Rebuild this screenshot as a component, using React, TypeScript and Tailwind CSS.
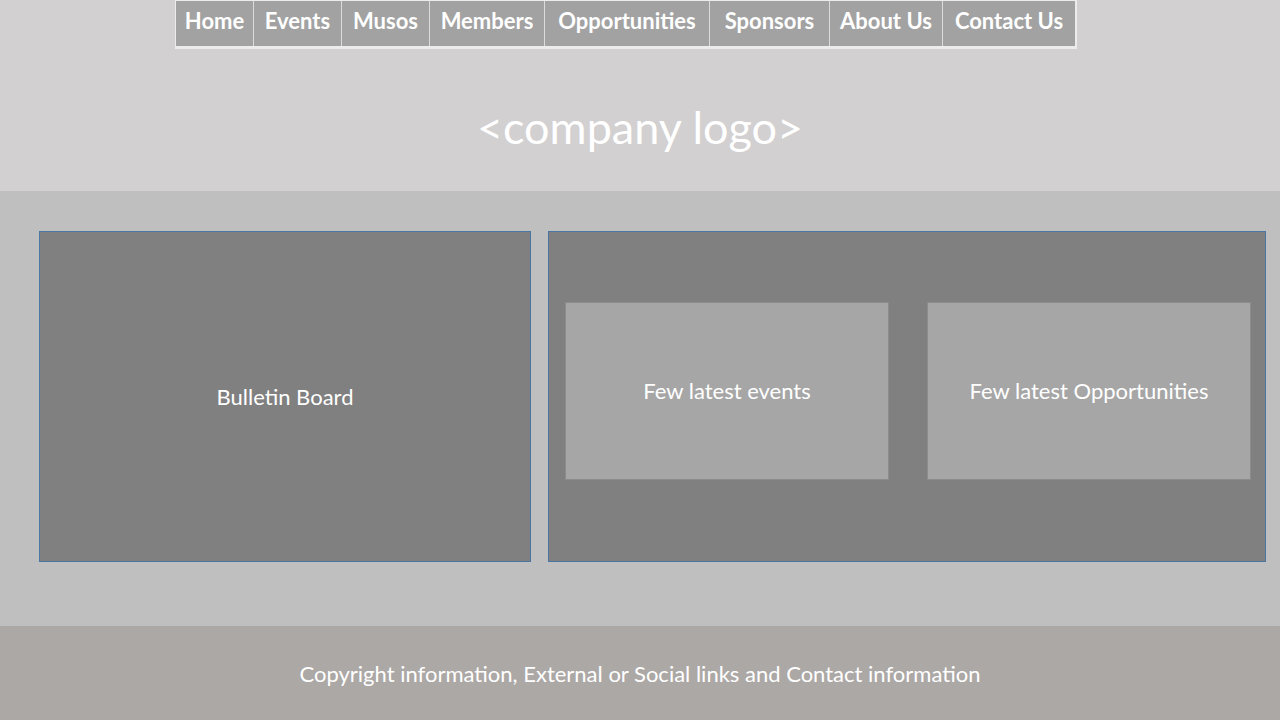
const navItems = [
  { label: 'Home', w: 'w-[78px]' },
  { label: 'Events', w: 'w-[88px]' },
  { label: 'Musos', w: 'w-[88px]' },
  { label: 'Members', w: 'w-[115px]' },
  { label: 'Opportunities', w: 'w-[165px]' },
  { label: 'Sponsors', w: 'w-[120px]' },
  { label: 'About Us', w: 'w-[113px]' },
  { label: 'Contact Us', w: 'w-[132px]' },
]

export default function App() {
  return (
    <div className="w-[1280px] h-[720px] flex flex-col font-['Lato','Open_Sans',sans-serif] text-white">
      {/* Header */}
      <header className="h-[191px] bg-[#d2d0d0] flex flex-col">
        <div className="pl-[175px]">
          <nav className="flex w-[902px] h-[49px] border-l border-r-2 border-t border-b-[3px] border-[#ececec] bg-[#a2a2a2]">
            {navItems.map((item, i) => (
              <div
                key={item.label}
                className={`${item.w} h-full flex items-start justify-center pt-[6px] text-[22px] font-bold leading-[28px] ${
                  i < navItems.length - 1 ? 'border-r border-[#dcdcdc]' : ''
                }`}
              >
                {item.label}
              </div>
            ))}
          </nav>
        </div>
        <div className="flex-1 flex items-center justify-center pt-[15px]">
          <h1 className="text-[45px] leading-none">&lt;company logo&gt;</h1>
        </div>
      </header>

      {/* Main */}
      <main className="h-[435px] bg-[#bfbfbf] flex gap-[17px] pl-[39px] pr-[14px] pt-[40px]">
        <section className="w-[492px] h-[331px] bg-[#808080] border border-[#4a76a4] flex items-center justify-center">
          <span className="text-[22px]">Bulletin Board</span>
        </section>
        <section className="flex-1 h-[331px] bg-[#808080] border border-[#4a76a4] flex gap-[38px] pl-[16px] pr-[14px] pt-[70px]">
          <div className="w-[324px] h-[178px] bg-[#a6a6a6] border border-[#8c8c8c] flex items-center justify-center pb-[2px]">
            <span className="text-[22px]">Few latest events</span>
          </div>
          <div className="w-[324px] h-[178px] bg-[#a6a6a6] border border-[#8c8c8c] flex items-center justify-center pb-[2px]">
            <span className="text-[22px]">Few latest Opportunities</span>
          </div>
        </section>
      </main>

      {/* Footer */}
      <footer className="flex-1 bg-[#aca8a6] flex items-center justify-center">
        <p className="text-[22px]">Copyright information, External or Social links and Contact information</p>
      </footer>
    </div>
  )
}
